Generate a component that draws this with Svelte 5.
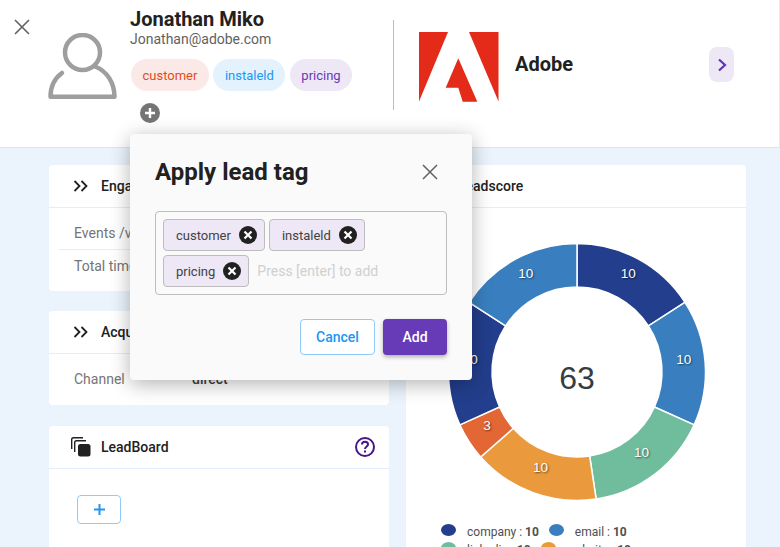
<script>
  const slices = [
    { name: 'company', value: 10, color: '#223e8c' },
    { name: 'email', value: 10, color: '#397fbf' },
    { name: 'linkedin', value: 10, color: '#70bd9e' },
    { name: 'website', value: 10, color: '#ea9a3d' },
    { name: 'referral', value: 3, color: '#e26735' },
    { name: 'company', value: 10, color: '#223e8c' },
    { name: 'email', value: 10, color: '#397fbf' }
  ];
  const legend = slices.slice(0, 4);
  const total = slices.reduce((sum, s) => sum + s.value, 0);

  const cx = 150;
  const cy = 130;
  const outer = 128.5;
  const inner = 85;

  function point(r, a) {
    return [cx + r * Math.sin(a), cy - r * Math.cos(a)];
  }

  let angle = 0;
  const arcs = slices.map((s) => {
    const start = angle;
    const end = angle + (s.value / total) * Math.PI * 2;
    angle = end;
    const [x1, y1] = point(outer, start);
    const [x2, y2] = point(outer, end);
    const [x3, y3] = point(inner, end);
    const [x4, y4] = point(inner, start);
    const [lx, ly] = point(107, (start + end) / 2);
    return {
      ...s,
      d: `M${x1} ${y1}A${outer} ${outer} 0 0 1 ${x2} ${y2}L${x3} ${y3}A${inner} ${inner} 0 0 0 ${x4} ${y4}Z`,
      lx,
      ly: ly - 5
    };
  });

  const headerTags = [
    { label: 'customer', cls: 'red' },
    { label: 'instaleld', cls: 'blue' },
    { label: 'pricing', cls: 'purple' }
  ];
  const chips = ['customer', 'instaleld', 'pricing'];
</script>

<div class="page">
  <header class="top">
    <button class="close" aria-label="Close">
      <svg width="16" height="16" viewBox="0 0 16 16"><path d="M1 1l14 14M15 1L1 15" stroke="#616161" stroke-width="1.6" fill="none" /></svg>
    </button>
    <svg class="avatar" width="70" height="68" viewBox="0 0 70 68" fill="none" stroke="#9e9e9e" stroke-width="4.5">
      <circle cx="34.500" cy="19.500" r="17.500" />
      <path d="M47 33.500C59 38 66.500 50 66.500 63.800H2.500C2.500 53 7 45 14 40" stroke-linecap="round" stroke-linejoin="round" />
    </svg>
    <div class="person">
      <h1>Jonathan Miko</h1>
      <p class="mail">Jonathan@adobe.com</p>
      <div class="tags">
        {#each headerTags as tag}
          <span class="tag {tag.cls}">{tag.label}</span>
        {/each}
        <span class="add-tag">
          <svg width="20" height="20" viewBox="0 0 20 20"><circle cx="10" cy="10" r="10" fill="#757575" /><path d="M10 5v10M5 10h10" stroke="#fff" stroke-width="2.4" /></svg>
        </span>
      </div>
    </div>
    <div class="divider"></div>
    <svg class="logo" width="80" height="70" viewBox="0 0 80 70">
      <path d="M0 0H29L0 69.500ZM50 0H79.500V69.500ZM39.300 26.300L58.300 69.700H43.700L39.300 55.700H26.700Z" fill="#e42a18" />
    </svg>
    <div class="company">Adobe</div>
    <button class="next" aria-label="Next">
      <svg width="12" height="14" viewBox="0 0 12 14"><path d="M3 1.500L9 7L3 12.500" stroke="#5e35b1" stroke-width="2.2" fill="none" /></svg>
    </button>
  </header>

  <main class="content">
    <div class="col">
      <section class="card">
        <div class="card-head">
          <svg class="chev" width="16" height="12" viewBox="0 0 16 12"><path d="M1.500 1L6.500 6L1.500 11M8.500 1L13.500 6L8.500 11" stroke="#212121" stroke-width="1.800" fill="none" /></svg>
          <h2>Engagement</h2>
        </div>
        <div class="card-body rows first">
          <div class="row"><span>Events /visit</span><b>12</b></div>
          <div class="row"><span>Total time</span><b>20m</b></div>
        </div>
      </section>
      <section class="card">
        <div class="card-head">
          <svg class="chev" width="16" height="12" viewBox="0 0 16 12"><path d="M1.500 1L6.500 6L1.500 11M8.500 1L13.500 6L8.500 11" stroke="#212121" stroke-width="1.800" fill="none" /></svg>
          <h2>Acquisition</h2>
        </div>
        <div class="card-body rows">
          <div class="row"><span>Channel</span><b>direct</b></div>
        </div>
      </section>
      <section class="card grow board">
        <div class="card-head">
          <svg class="stack" width="20" height="20" viewBox="0 0 20 20" fill="none" stroke="#212121" stroke-width="1.400">
            <path d="M.7 12V2.500Q.7.700 2.500.700H12" />
            <path d="M3.700 15V5.500Q3.700 3.700 5.500 3.700H15" />
            <rect x="7" y="7" width="12.500" height="12.500" rx="2.500" fill="#212121" stroke="none" />
          </svg>
          <h2>LeadBoard</h2>
          <svg class="help" width="20" height="20" viewBox="0 0 20 20" fill="none" stroke="#4a148c" stroke-width="2">
            <circle cx="10" cy="10" r="9" />
            <path d="M7 7.500C7 5.800 8.300 4.800 10 4.800C11.700 4.800 13 5.900 13 7.400C13 9.400 10 9.500 10 12" />
            <path d="M10 13.500v2" />
          </svg>
        </div>
        <div class="card-body">
          <button class="plus" aria-label="Add">
            <svg width="11" height="11" viewBox="0 0 11 11"><path d="M5.500 0v11M0 5.500h11" stroke="#2196f3" stroke-width="2" /></svg>
          </button>
        </div>
      </section>
    </div>

    <div class="col">
      <section class="card grow">
        <div class="card-head">
          <svg class="chev" width="16" height="12" viewBox="0 0 16 12"><path d="M1.500 1L6.500 6L1.500 11M8.500 1L13.500 6L8.500 11" stroke="#212121" stroke-width="1.800" fill="none" /></svg>
          <h2>Leadscore</h2>
        </div>
        <div class="chart">
          <svg class="donut" width="300" height="262" viewBox="0 0 300 262">
            {#each arcs as arc}
              <path d={arc.d} fill={arc.color} stroke="#fff" stroke-width="1.500" />
            {/each}
            {#each arcs as arc}
              <text class="val" x={arc.lx} y={arc.ly} text-anchor="middle" dominant-baseline="central">{arc.value}</text>
            {/each}
            <text class="sum" x={cx} y={cy + 5.500} text-anchor="middle" dominant-baseline="central">{total}</text>
          </svg>
          <div class="legend">
            {#each legend as item}
              <span class="legend-item">
                <i style="background: {item.color}"></i>
                <span class="legend-label">{item.name} : <b>{item.value}</b></span>
              </span>
            {/each}
          </div>
        </div>
      </section>
    </div>
  </main>

  <div class="modal">
    <div class="modal-head">
      <h3>Apply lead tag</h3>
      <svg width="16" height="16" viewBox="0 0 16 16"><path d="M1 1l14 14M15 1L1 15" stroke="#616161" stroke-width="1.500" fill="none" /></svg>
    </div>
    <div class="chip-input">
      {#each chips as chip}
        <span class="chip">
          {chip}
          <svg width="18" height="18" viewBox="0 0 18 18"><circle cx="9" cy="9" r="9" fill="#212121" /><path d="M5.500 5.500l7 7M12.500 5.500l-7 7" stroke="#fff" stroke-width="2.200" /></svg>
        </span>
      {/each}
      <span class="placeholder">Press [enter] to add</span>
    </div>
    <div class="actions">
      <button class="cancel">Cancel</button>
      <button class="add">Add</button>
    </div>
  </div>
</div>

<style>
  :global(body) {
    margin: 0;
    font-family: Roboto, sans-serif;
  }
  .page {
    position: relative;
    width: 780px;
    height: 547px;
    overflow: hidden;
    background: #ebf4fc;
    color: #212121;
  }
  button {
    font-family: inherit;
    cursor: pointer;
  }
  .top {
    height: 148px;
    box-sizing: border-box;
    display: flex;
    align-items: flex-start;
    background: #fff;
    border-bottom: 1px solid #dfe3e6;
    border-right: 1px solid #e6e9ec;
  }
  .close {
    margin: 19px 0 0 14px;
    padding: 0;
    border: 0;
    background: none;
    width: 16px;
    height: 16px;
  }
  .avatar {
    margin: 33px 0 0 18px;
  }
  .person {
    width: 240px;
    margin: 9px 0 0 12px;
    flex: none;
  }
  h1 {
    margin: 0;
    font-size: 20px;
    line-height: 21px;
    font-weight: 700;
  }
  .mail {
    margin: 1px 0 0;
    font-size: 14px;
    line-height: 17px;
    color: #616161;
  }
  .tags {
    display: flex;
    flex-wrap: wrap;
    gap: 12px 4.500px;
    margin-top: 11px;
    margin-left: 1px;
  }
  .tag {
    height: 32px;
    display: flex;
    align-items: center;
    padding: 0 11.500px;
    border-radius: 16px;
    font-size: 13px;
  }
  .red {
    background: #fbe9e7;
    color: #e64a19;
  }
  .blue {
    background: #e3f2fd;
    color: #2196f3;
  }
  .purple {
    background: #ede7f6;
    color: #673ab7;
  }
  .add-tag {
    margin-left: 9px;
    height: 20px;
  }
  .divider {
    width: 1px;
    height: 90px;
    margin: 20px 25px 0 23px;
    background: #bdbdbd;
  }
  .logo {
    margin-top: 32px;
  }
  .company {
    margin: 52px 0 0 16px;
    width: 194px;
    font-size: 20px;
    line-height: 24px;
    font-weight: 700;
    flex: none;
  }
  .next {
    width: 25px;
    height: 35px;
    margin-top: 47px;
    padding: 0;
    border: 0;
    border-radius: 8px;
    background: #ede7f6;
    display: flex;
    align-items: center;
    justify-content: center;
  }
  .content {
    display: grid;
    grid-template-columns: 340px 340px;
    gap: 17px;
    padding: 17px 0 0 49px;
    height: 399px;
  }
  .col {
    display: flex;
    flex-direction: column;
    gap: 20px;
    min-height: 0;
  }
  .card {
    background: #fff;
    border-radius: 4px;
    overflow: hidden;
    flex: none;
  }
  .grow {
    flex: 1;
  }
  .board {
    margin-top: 1px;
  }
  .card-head {
    height: 42px;
    display: flex;
    align-items: center;
    gap: 12px;
    padding: 0 14px 0 23px;
    border-bottom: 1px solid #e3eef8;
  }
  .chev {
    margin-left: 1px;
  }
  .stack {
    margin-left: -1px;
    margin-right: -2px;
  }
  h2 {
    margin: 0;
    font-size: 14px;
    font-weight: 500;
    flex: 1;
  }
  .rows {
    padding: 9px 10px 10px;
  }
  .rows.first {
    padding-bottom: 9px;
  }
  .row {
    display: flex;
    height: 32px;
    align-items: center;
    padding-left: 15px;
    font-size: 14px;
    color: #757575;
    border-top: 1px solid #e8eef3;
  }
  .row:first-child {
    border-top: 0;
  }
  .row span {
    width: 118px;
  }
  .row b {
    color: #424242;
    font-weight: 500;
    font-size: 14px;
  }
  .plus {
    margin: 26px 0 0 28px;
    width: 44px;
    height: 29px;
    border: 1px solid #90caf9;
    border-radius: 4px;
    background: #fff;
    display: flex;
    align-items: center;
    justify-content: center;
    padding: 0;
  }
  .chart {
    padding-top: 33.500px;
  }
  .donut {
    display: block;
    margin-left: 21.300px;
  }
  .val {
    fill: #fff;
    font-family: "Liberation Sans", sans-serif;
    font-size: 13.500px;
    text-shadow: 1px 1px 2px rgba(0, 0, 0, 0.55);
  }
  .sum {
    fill: #373d3f;
    font-family: "Liberation Sans", sans-serif;
    font-size: 32px;
  }
  .legend {
    display: flex;
    flex-wrap: wrap;
    gap: 0 10px;
    width: 260px;
    margin: 17.500px 0 0 35px;
    font-size: 12px;
    color: #4f4f4f;
  }
  .legend-item {
    display: flex;
    align-items: center;
    gap: 11px;
    height: 18px;
  }
  .legend-item i {
    width: 15px;
    height: 12px;
    border-radius: 50%;
  }
  .legend-label {
    padding-top: 4px;
  }
  .legend-item b {
    font-weight: 700;
  }
  .modal {
    position: absolute;
    left: 130px;
    top: 134px;
    width: 342px;
    height: 246px;
    box-sizing: border-box;
    padding: 24px 25px 0 25px;
    background: #fafafa;
    border-radius: 4px;
    box-shadow: 0 4px 20px rgba(0, 0, 0, 0.3);
  }
  .modal-head {
    display: flex;
    align-items: center;
    justify-content: space-between;
    padding-right: 9px;
  }
  h3 {
    margin: 0;
    font-size: 24px;
    line-height: 28px;
    font-weight: 700;
  }
  .chip-input {
    margin-top: 25px;
    box-sizing: border-box;
    height: 84px;
    display: flex;
    flex-wrap: wrap;
    align-content: flex-start;
    align-items: center;
    gap: 4px;
    padding: 7px;
    border: 1px solid #bdbdbd;
    border-radius: 4px;
  }
  .chip {
    box-sizing: border-box;
    height: 32px;
    display: flex;
    align-items: center;
    gap: 8px;
    padding: 0 7px 0 12px;
    background: #ede7f6;
    border: 1px solid #bdbdbd;
    border-radius: 4px;
    font-size: 13px;
    color: #424242;
  }
  .placeholder {
    margin-left: 4px;
    font-size: 14px;
    color: #d0d0d0;
  }
  .actions {
    display: flex;
    justify-content: flex-end;
    gap: 8px;
    margin-top: 24px;
  }
  .actions button {
    height: 36px;
    border-radius: 4px;
    font-size: 14px;
    font-weight: 500;
    padding: 0;
  }
  .cancel {
    width: 75px;
    background: #fff;
    border: 1px solid #90caf9;
    color: #2196f3;
  }
  .add {
    width: 64px;
    background: #673ab7;
    border: 0;
    color: #fff;
    box-shadow: 0 2px 4px rgba(0, 0, 0, 0.3);
  }
</style>
